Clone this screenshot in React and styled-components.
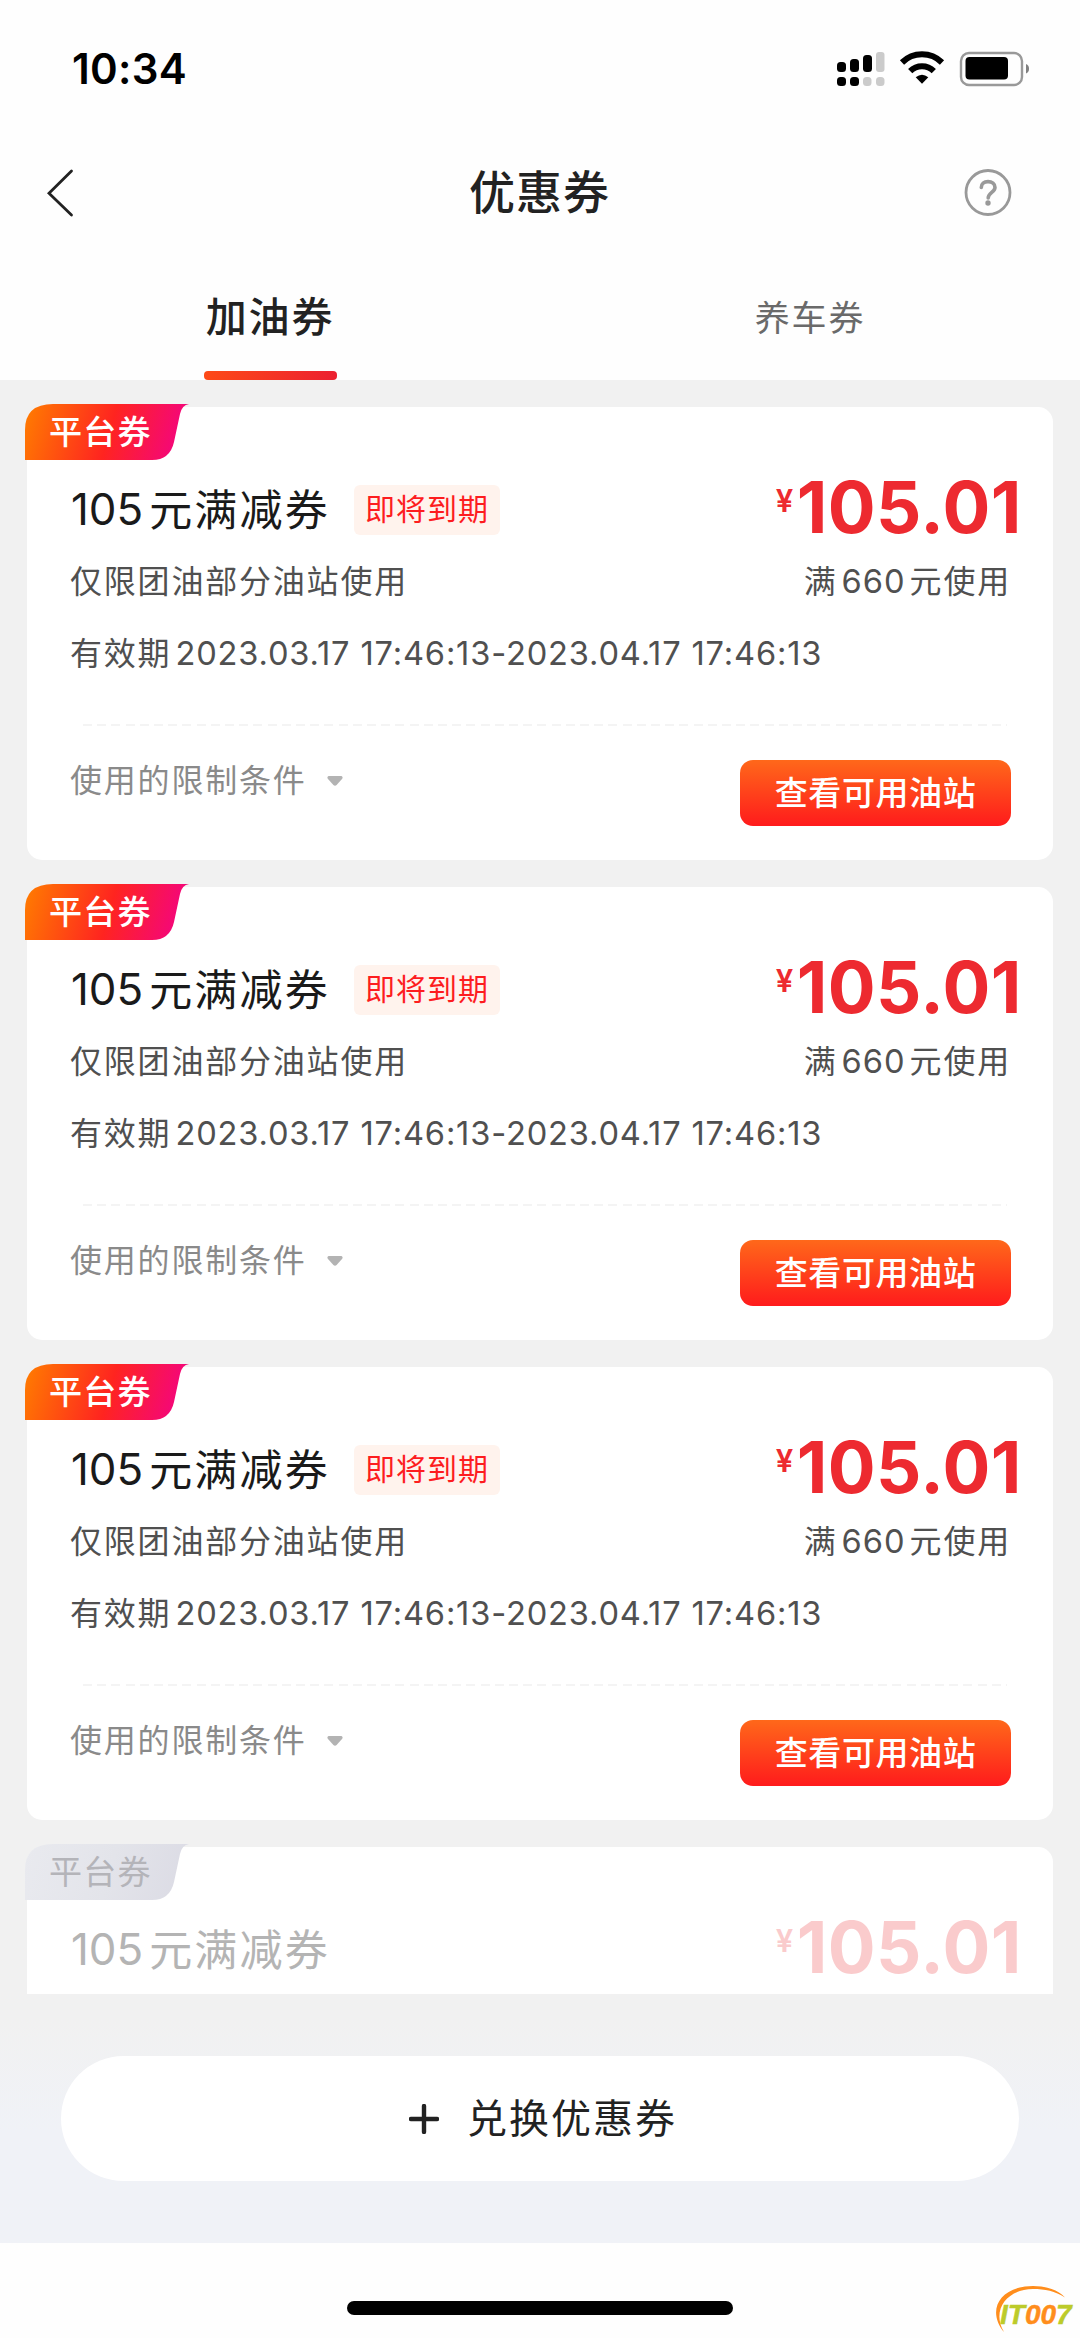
import React from 'react';
import styled, { createGlobalStyle } from 'styled-components';

const GlobalStyle = createGlobalStyle`
  * {
    box-sizing: border-box;
  }
  body {
    margin: 0;
    background-color: #fff;
    font-family: Inter, 'Noto Sans CJK SC', sans-serif;
  }
  button {
    border: 0;
    padding: 0;
    background: none;
    font-family: inherit;
  }
`;

const Screen = styled.div`
  width: 1080px;
  height: 2338px;
  display: flex;
  flex-direction: column;
  overflow: hidden;
  background-color: #fefefe;
`;

const StatusBar = styled.div`
  height: 140px;
  padding: 30px 30px 0 72px;
  display: flex;
  justify-content: space-between;
  align-items: flex-start;
`;

const Time = styled.div`
  font-size: 42px;
  font-weight: 600;
  line-height: 78px;
  letter-spacing: .3px;
  color: #000;
`;

const NavBar = styled.div`
  height: 106px;
  padding: 0 68px 0 44px;
  display: grid;
  grid-template-columns: 60px 1fr 48px;
  align-items: center;
`;

const NavTitle = styled.div`
  padding: 0 0 3px 11px;
  text-align: center;
  font-size: 46px;
  font-weight: 500;
  line-height: 66px;
  letter-spacing: 1px;
  color: #222;
`;

const Icon = styled.svg`
  display: block;
`;

const Tabs = styled.div`
  height: 134px;
  display: grid;
  grid-template-columns: 1fr 1fr;
`;

const Tab = styled.button`
  display: flex;
  flex-direction: column;
  align-items: center;
  justify-content: space-between;
  padding-top: ${props => (props.$active ? '39px' : '40px')};
  font-size: ${props => (props.$active ? '41px' : '35px')};
  font-weight: ${props => (props.$active ? 500 : 400)};
  letter-spacing: 1.8px;
  line-height: 64px;
  color: ${props => (props.$active ? '#222' : '#6a6a6a')};
`;

const TabLine = styled.span`
  width: 133px;
  height: 9px;
  border-radius: 4px;
  background: linear-gradient(90deg, #fd4a17, #ec2030);
`;

const List = styled.div`
  height: 1614px;
  padding: 27px 27px 0;
  overflow: hidden;
  background-color: #f1f1f1;
`;

const Card = styled.div`
  position: relative;
  height: 453px;
  margin-bottom: 27px;
  padding: 77px 42px 0 43px;
  border-radius: 15px;
  background-color: #fff;
`;

const Badge = styled.div`
  position: absolute;
  left: -2px;
  top: -3px;
  width: 165px;
  height: 56px;
  color: ${props => (props.$used ? '#b4b4b9' : '#fff')};

  svg {
    position: absolute;
    left: 0;
    top: 0;
  }
  span {
    position: relative;
    display: block;
    padding-left: 24px;
    font-size: 33px;
    font-weight: ${props => (props.$used ? 400 : 500)};
    line-height: 56px;
    letter-spacing: 1.2px;
  }
`;

const Row = styled.div`
  display: flex;
  justify-content: space-between;
  align-items: center;
  height: ${props => props.$height};
`;

const Name = styled.div`
  display: flex;
  align-items: center;
  padding-left: 1px;
  font-size: 43px;
  line-height: 52px;
  letter-spacing: 2.2px;
  color: ${props => (props.$used ? '#b4b4b4' : '#1a1a1a')};
`;

const Num = styled.span`
  font-size: 1.02em;
  letter-spacing: ${props => props.$spacing || 0};
  margin: ${props => props.$margin || 0};
`;

const Tag = styled.div`
  width: 146px;
  height: 50px;
  margin-left: 24px;
  border-radius: 6px;
  background-color: #fff3ed;
  text-align: center;
  font-size: 30px;
  line-height: 49px;
  letter-spacing: 1px;
  color: #fd1d1f;
`;

const Price = styled.div`
  display: flex;
  align-items: flex-start;
  margin: 0 -11px 7px 0;
  font-size: 71px;
  font-weight: 700;
  line-height: 52px;
  letter-spacing: .5px;
  color: #ed2a30;
  opacity: ${props => (props.$used ? .24 : 1)};
`;

const Yen = styled.span`
  margin-right: 3px;
  font-size: 31px;
  font-weight: 600;
  line-height: 40px;
`;

const Text = styled.div`
  display: flex;
  align-items: baseline;
  padding-bottom: 1px;
  font-size: 32px;
  letter-spacing: 1.8px;
  color: #505050;
`;

const Divider = styled.div`
  height: 2px;
  margin: 44px 4px 34px 13px;
  background: repeating-linear-gradient(90deg, #f4f4f4 0 9px, transparent 9px 14.2px);
`;

const Limit = styled.button`
  display: flex;
  align-items: center;
  gap: 20px;
  margin-bottom: 25px;
  font-size: 32px;
  line-height: 42px;
  letter-spacing: 1.8px;
  color: #8a8a8a;
`;

const StationsButton = styled.button`
  width: 271px;
  height: 66px;
  border-radius: 13px;
  background: linear-gradient(180deg, #ff681a, #ff1b1c);
  font-size: 33px;
  font-weight: 500;
  line-height: 65px;
  letter-spacing: .6px;
  color: #fff;
`;

const Bottom = styled.div`
  height: 249px;
  padding: 62px 61px 0;
  background: linear-gradient(180deg, #f1f1f1 10%, #f0f2f7 55%);
`;

const ExchangeButton = styled.button`
  width: 100%;
  height: 125px;
  padding-left: 6px;
  display: flex;
  align-items: center;
  justify-content: center;
  gap: 28px;
  border-radius: 63px;
  background-color: #fff;
  font-size: 40px;
  letter-spacing: 2px;
  color: #222;

  span {
    padding-bottom: 5px;
  }
`;

const HomeArea = styled.div`
  position: relative;
  height: 95px;
  padding-top: 58px;
`;

const HomeBar = styled.div`
  width: 386px;
  height: 14px;
  margin: 0 auto;
  border-radius: 7px;
  background-color: #000;
`;

const Logo = styled.div`
  position: absolute;
  right: 1px;
  top: 40px;
  width: 84px;
  height: 55px;

  svg {
    position: absolute;
    left: 0;
    top: 0;
  }
`;

const LogoText = styled.div`
  position: relative;
  padding: 8px 0 0 5px;
  font-family: 'Liberation Sans', sans-serif;
  font-size: 28px;
  font-weight: 700;
  font-style: italic;
  line-height: 48px;
  -webkit-text-stroke: .5px;
  color: #bccb2a;

  em {
    color: #ff8d1c;
  }
`;

const StatusIcons = () => (
  <Icon width="230" height="80" viewBox="0 0 230 80">
    <g fill="#000">
      <rect x="17" y="32" width="9" height="10" rx="3.5" />
      <rect x="30" y="29" width="9" height="13" rx="3.5" />
      <rect x="43" y="25" width="9" height="17" rx="3.5" />
      <rect x="17" y="47" width="9" height="9" rx="3.5" />
      <rect x="30" y="47" width="9" height="9" rx="3.5" />
    </g>
    <g fill="#cbcbcb">
      <rect x="56" y="22" width="8.5" height="20" rx="3" />
      <rect x="43" y="47" width="8.5" height="9" rx="3.5" />
      <rect x="56" y="47" width="8.5" height="9" rx="3.5" />
    </g>
    <g fill="none" stroke="#000" strokeWidth="6">
      <path d="M82 32.5A28.5 28.5 0 0 1 122 32.5" />
      <path d="M90.2 41.2A16.8 16.8 0 0 1 113.8 41.2" />
    </g>
    <path d="M102 53.8L95.7 47.2Q102 42.2 108.3 47.2Z" fill="#000" />
    <rect x="141" y="23" width="61" height="32" rx="8" fill="none" stroke="#999" strokeWidth="2.4" />
    <rect x="145.5" y="27" width="42.5" height="22.5" rx="4" fill="#000" />
    <path d="M206 34Q209 35 209 38.7T206 43.5Z" fill="#808080" />
  </Icon>
);

const BackIcon = () => (
  <Icon width="30" height="50" viewBox="0 0 30 50">
    <path d="M27.5 3L5 25.3L27.5 47" fill="none" stroke="#222" strokeWidth="2.8" strokeLinecap="round" />
  </Icon>
);

const HelpIcon = () => (
  <Icon width="48" height="48" viewBox="0 0 48 48">
    <circle cx="24" cy="23.5" r="22" fill="none" stroke="#999" strokeWidth="2.8" />
    <path
      d="M17.3 18.5C17.3 14.5 20 12.6 24 12.6C28 12.6 31 15 31 18.4C31 23.2 24.2 23.6 24.2 29"
      fill="none"
      stroke="#999"
      strokeWidth="3.6"
      strokeLinecap="round"
    />
    <circle cx="24" cy="34" r="2.7" fill="#999" />
  </Icon>
);

const PlatformBadge = ({ used, id }) => (
  <Badge $used={used}>
    <svg width="165" height="56" viewBox="0 0 165 56">
      <defs>
        <linearGradient id={id} x1="0" y1="0" x2="1" y2=".1">
          <stop offset="0" stopColor={used ? '#e9eaef' : '#ff7d00'} />
          <stop offset=".56" stopColor={used ? '#e3e4ea' : '#ff2420'} />
          <stop offset="1" stopColor={used ? '#dcdce5' : '#f4067c'} />
        </linearGradient>
      </defs>
      <path d="M0 56V26Q0 0 28 0H164Q157 1 155 10L149 38Q145 56 127 56Z" fill={`url(#${id})`} />
    </svg>
    <span>平台券</span>
  </Badge>
);

const CouponDetails = () => (
  <>
    <Row $height="86px">
      <Text>仅限团油部分油站使用</Text>
      <Text>
        满
        <Num $margin="0 4px" $spacing="1px">660</Num>
        元使用
      </Text>
    </Row>
    <Row $height="58px">
      <Text>
        有效期
        <Num $margin="0 0 0 4px" $spacing=".83px">2023.03.17 17:46:13-2023.04.17 17:46:13</Num>
      </Text>
    </Row>
    <Divider />
    <Row $height="66px">
      <Limit>
        使用的限制条件
        <svg width="16" height="10" viewBox="0 0 16 10">
          <path d="M1.5 0H14.5Q16.5 1 15 3L9.6 9Q8 10.6 6.4 9L1 3Q-.5 1 1.5 0Z" fill="#b3b3b3" />
        </svg>
      </Limit>
      <StationsButton>查看可用油站</StationsButton>
    </Row>
  </>
);

const Coupon = ({ id, used }) => (
  <Card>
    <PlatformBadge used={used} id={`badge-${id}`} />
    <Row $height="52px">
      <Name $used={used}>
        <Num $margin="0 6px 0 0">105</Num>
        元满减券
        {!used && <Tag>即将到期</Tag>}
      </Name>
      <Price $used={used}>
        <Yen>¥</Yen>
        105.01
      </Price>
    </Row>
    {!used && <CouponDetails />}
  </Card>
);

const coupons = [
  { id: 1 },
  { id: 2 },
  { id: 3 },
  { id: 4, used: true },
];

const App = () => (
  <Screen>
    <GlobalStyle />
    <StatusBar>
      <Time>10:34</Time>
      <StatusIcons />
    </StatusBar>
    <NavBar>
      <BackIcon />
      <NavTitle>优惠券</NavTitle>
      <HelpIcon />
    </NavBar>
    <Tabs>
      <Tab $active>
        加油券
        <TabLine />
      </Tab>
      <Tab>养车券</Tab>
    </Tabs>
    <List>
      {coupons.map(c => <Coupon key={c.id} {...c} />)}
    </List>
    <Bottom>
      <ExchangeButton>
        <svg width="30" height="30" viewBox="0 0 30 30">
          <path d="M15 2V28M2 15H28" stroke="#222" strokeWidth="4.4" strokeLinecap="round" />
        </svg>
        <span>兑换优惠券</span>
      </ExchangeButton>
    </Bottom>
    <HomeArea>
      <HomeBar />
      <Logo>
        <svg width="84" height="55" viewBox="0 0 84 55">
          <path d="M9 49C-9 27 5 3 38 3C52 3 63 7 70 14.5C60 8 50 6 38 6C12 6 -4 27 9 49Z" fill="#ff8d1c" />
        </svg>
        <LogoText>IT<em>00</em>7</LogoText>
      </Logo>
    </HomeArea>
  </Screen>
);

export default App;
